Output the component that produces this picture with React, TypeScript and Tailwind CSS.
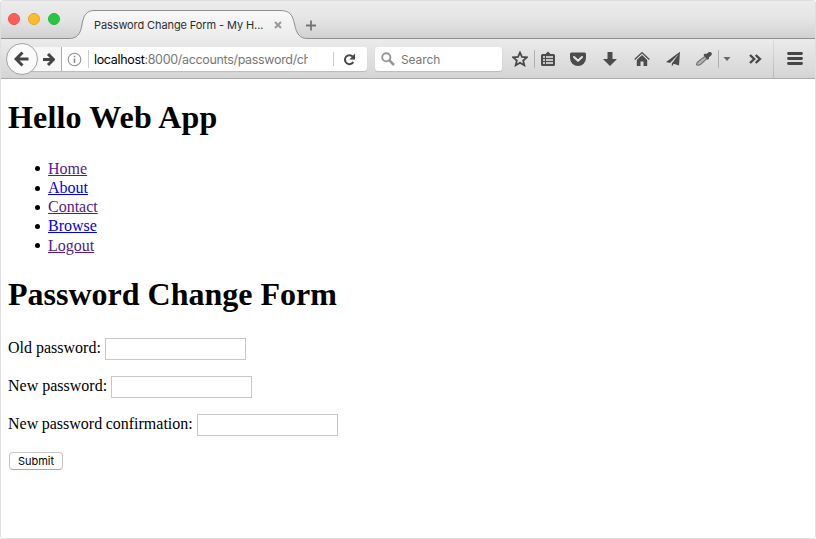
import type { ReactNode } from "react";

const links = [
  { label: "Home", visited: true },
  { label: "About", visited: false },
  { label: "Contact", visited: true },
  { label: "Browse", visited: false },
  { label: "Logout", visited: true },
];

const fields = [
  { label: "Old password:", spacing: "" },
  { label: "New password:", spacing: "" },
  { label: "New password confirmation:", spacing: "[word-spacing:-0.5px]" },
];

function Icon({ className = "", children }: { className?: string; children: ReactNode }) {
  return (
    <svg viewBox="0 0 16 16" width="16" height="16" className={`shrink-0 ${className}`} fill="#4c4c4c">
      {children}
    </svg>
  );
}

function TabStrip() {
  return (
    <div className="relative flex h-[38px] bg-linear-to-b from-[#ececec] via-[#e4e4e4] to-[#d0d0d0]">
      <svg className="absolute inset-0" width="814" height="38" viewBox="0 0 814 38">
        <defs>
          <linearGradient id="tab" x1="0" y1="0" x2="0" y2="1">
            <stop offset="0" stopColor="#f8f8f8" />
            <stop offset="1" stopColor="#ebebeb" />
          </linearGradient>
        </defs>
        <path
          d="M-2 37.5H68C76 37.5 79 33 80.500 26C82.500 14 85 9.500 94 9.500H279C289 9.500 291.500 14 293.500 23C295.500 33 299 37.500 306 37.500H816V40H-2Z"
          fill="url(#tab)"
          stroke="#8e8e8e"
        />
      </svg>
      <div className="relative ml-[7px] mt-3 flex h-3 gap-2">
        <span className="size-3 rounded-full border border-[#e9524a] bg-[#fc605b]" />
        <span className="size-3 rounded-full border border-[#e1a32a] bg-[#fdbc2e]" />
        <span className="size-3 rounded-full border border-[#25b739] bg-[#27c840]" />
      </div>
      <span className="relative ml-[34px] mt-4 w-[171px] whitespace-nowrap font-['Inter',sans-serif] text-[11px] leading-4 tracking-[-0.1px] text-[#2e2e2e]">
        Password Change Form - My H...
      </span>
      <svg className="relative ml-[9px] mt-5" width="8" height="9" viewBox="0 0 8 9">
        <path d="M1 1L7 7M7 1L1 7" stroke="#999" strokeWidth="2" />
      </svg>
      <svg className="relative ml-[23px] mt-[19px]" width="12" height="11" viewBox="0 0 12 11">
        <path d="M6 0.500V10.500M1 5.500H11" stroke="#747474" strokeWidth="1.800" />
      </svg>
    </div>
  );
}

function Toolbar() {
  return (
    <div className="flex h-10 items-center border-b border-[#aaa] bg-linear-to-b from-[#ebebeb] to-[#d5d5d5] pt-px">
      <div className="relative z-10 ml-[5px] flex size-8 shrink-0 items-center justify-center rounded-full border border-[#a2a2a2] bg-[#fafafa]">
        <Icon>
          <path d="M8.500 1.500L2 8L8.500 14.500M2.500 8H14.500" fill="none" stroke="#444" strokeWidth="3" />
        </Icon>
      </div>
      <div className="-ml-3 flex h-6 w-[341px] shrink-0 items-center rounded-[3px] bg-white shadow-[0_1px_1px_#bbb]">
        <div className="flex h-6 w-9 items-center justify-end border-r border-[#aaa] bg-[#f7f7f7] pr-1.5">
          <svg width="13" height="13" viewBox="0 0 13 13">
            <path d="M6 1L11.500 6.500L6 12M11 6.500H1" fill="none" stroke="#444" strokeWidth="3" />
          </svg>
        </div>
        <svg className="ml-[5px] shrink-0" width="15" height="15" viewBox="0 0 15 15">
          <circle cx="7.500" cy="7.500" r="6.300" fill="none" stroke="#929292" strokeWidth="1.100" />
          <path d="M7.500 6.500V11M7.500 3.700V5.300" stroke="#858585" strokeWidth="1.500" />
        </svg>
        <span className="ml-1.5 h-[18px] w-px bg-[#ccc]" />
        <span className="ml-[5px] mt-0.5 w-[214px] overflow-hidden whitespace-nowrap font-['Inter',sans-serif] text-[12.5px] leading-5 tracking-[-0.33px] text-[#777]">
          <span className="text-black">localhost</span>:8000/accounts/password/ch
        </span>
        <span className="ml-[25px] h-[14px] w-px bg-[#ccc]" />
        <svg className="ml-[9px]" width="13" height="13" viewBox="0 0 13 13">
          <path d="M9.800 3.600A4.500 4.500 0 1 0 10.300 9" fill="none" stroke="#484848" strokeWidth="2" />
          <path d="M12 0.500V6.500H6.500Z" fill="#484848" />
        </svg>
      </div>
      <div className="ml-2 flex h-6 w-[127px] shrink-0 items-center rounded-[3px] bg-white shadow-[0_1px_1px_#bbb]">
        <svg className="ml-1.5" width="14" height="14" viewBox="0 0 14 14" fill="none" stroke="#969696">
          <circle cx="5.300" cy="5.300" r="4.100" strokeWidth="1.900" />
          <path d="M8.300 8.300L13 13" strokeWidth="2.600" />
        </svg>
        <span className="ml-1.5 mt-0.5 font-['Inter',sans-serif] text-xs leading-5 tracking-[-0.1px] text-[#777]">Search</span>
      </div>

      <Icon className="ml-2.5">
        <path d="M8 1.500L10 6L14.700 6.400L11.200 9.600L12.300 14.300L8 11.800L3.700 14.300L4.800 9.600L1.300 6.400L6 6Z" fill="none" stroke="#484848" strokeWidth="1.800" />
      </Icon>
      <span className="ml-1.5 h-[18px] w-px bg-[#b0b0b0]" />
      <Icon className="ml-[5px]">
        <path d="M5.500 3L8 0.600L10.500 3H13.500Q15 3 15 4.500V13.500Q15 15 13.500 15H2.500Q1 15 1 13.500V4.500Q1 3 2.500 3Z" />
        <path d="M3 6H5M6 6H13M3 9H5M6 9H13M3 12H5M6 12H13" stroke="#eee" strokeWidth="1.400" />
      </Icon>
      <Icon className="ml-3.5">
        <path d="M1.500 1.500H14.500Q16 1.500 16 3V7A8 8 0 0 1 0 7V3Q0 1.500 1.500 1.500Z" />
        <path d="M4 6L8 9.700L12 6" fill="none" stroke="#e4e4e4" strokeWidth="2.100" strokeLinecap="round" strokeLinejoin="round" />
      </Icon>
      <Icon className="ml-4">
        <path d="M5.500 1H10.500V8H15L8 15L1 8H5.500Z" />
      </Icon>
      <Icon className="ml-4">
        <path d="M0.700 8.500L8 1.600L15.300 8.500" fill="none" stroke="#4c4c4c" strokeWidth="1.400" />
        <path d="M8 4L13.200 9V15H9.500V10.500H6.500V15H2.800V9Z" />
      </Icon>
      <Icon className="ml-[15px]">
        <path d="M15 0.800L1 11L5 12L13.800 3L6.800 12.500V15.500L8.800 12.800L14 14.500Z" />
      </Icon>
      <Icon className="ml-[15px]">
        <path d="M9.500 5L2 10.700Q0.300 12.300 0.800 14Q3 14.600 5 13L11.500 7Z" fill="#b5b5b5" stroke="#777" strokeWidth="1.200" />
        <path d="M7.500 4L9 2.500L10.500 3L12.500 1.200Q14.800 0.600 15.800 2.200Q16.200 4 14.500 5L13 6.300L12.800 8L11.300 8.700Z" />
      </Icon>
      <span className="ml-1.5 h-[18px] w-px bg-[#b0b0b0]" />
      <svg className="ml-1 shrink-0" width="8" height="6" viewBox="0 0 8 6">
        <path d="M0.500 1H7.500L4 5Z" fill="#666" />
      </svg>
      <Icon className="ml-4">
        <path d="M3 4L7.200 8L3 12M8.700 4L12.900 8L8.700 12" fill="none" stroke="#484848" strokeWidth="2.400" />
      </Icon>
      <span className="ml-2.5 h-[38px] w-px bg-linear-to-b from-[#e0e0e0] to-[#b5b5b5]" />
      <svg className="ml-[13px] shrink-0" width="16" height="14" viewBox="0 0 16 14">
        <path d="M1.500 1.500H14.500M1.500 6.500H14.500M1.500 11.500H14.500" stroke="#454545" strokeWidth="2.800" strokeLinecap="round" />
      </svg>
    </div>
  );
}

export default function App() {
  return (
    <div className="h-[539px] w-[816px] overflow-hidden rounded-[3px] border border-[#dedede] bg-white font-['Liberation_Serif',serif] text-base leading-[19.200px] text-black">
      <TabStrip />
      <Toolbar />
      <main className="px-[7px] pt-[19px]">
        <h1 className="text-[32px] font-bold leading-[38px] tracking-[0.15px]">Hello Web App</h1>
        <ul className="mt-[22.800px]">
          {links.map((link) => (
            <li key={link.label} className="flex items-center pl-[27px]">
              <span className="mr-2 mt-px size-[5px] rounded-full bg-black" />
              <a href="#" className={link.visited ? "text-[#551a8b] underline" : "text-[#0000ee] underline"}>
                {link.label}
              </a>
            </li>
          ))}
        </ul>
        <h1 className="mt-[20.200px] text-[32px] font-bold leading-[38px]">Password Change Form</h1>
        <form className="mt-[25px] flex flex-col items-start gap-4">
          {fields.map((field) => (
            <label key={field.label} className="flex h-[22px] items-center">
              <span className={`-mt-0.5 ${field.spacing}`}>{field.label}</span>
              <input type="password" className="ml-1 h-[22px] w-[141px] border border-[#c8c8c8] bg-white outline-none" />
            </label>
          ))}
          <button
            type="button"
            className="ml-px h-[18px] w-[54px] rounded-[4px] border border-[#c8c8c8] border-b-[#aaa] bg-white font-['Inter',sans-serif] text-[11px] leading-4"
          >
            Submit
          </button>
        </form>
      </main>
    </div>
  );
}
